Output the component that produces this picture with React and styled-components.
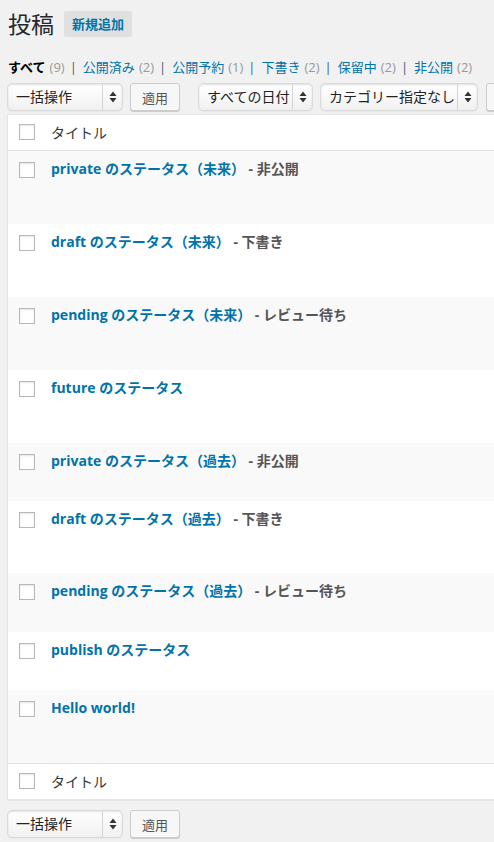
import React from 'react'
import styled, {createGlobalStyle} from 'styled-components'

const GlobalStyle = createGlobalStyle`
    html, body {
        margin: 0;
        padding: 0;
        background: #f1f1f1;
        overflow-x: hidden;
    }
    body {
        font-family: "Open Sans", "Noto Sans CJK JP", sans-serif;
        font-size: 13px;
        color: #23282d;
    }
`

const Wrap = styled.div`
    padding: 11px 0 0 7px;
    width: 580px;
`

const PageHeader = styled.div`
    display: flex;
    align-items: center;
    height: 26px;
`

const Heading = styled.h1`
    margin: 0 0 0 1px;
    font-size: 23px;
    font-weight: 400;
    line-height: 26px;
    color: #23282d;
`

const AddNew = styled.a`
    margin-left: 10px;
    padding: 0 8px;
    height: 26px;
    line-height: 26px;
    background: #e0e0e0;
    border-radius: 2px;
    color: #0073aa;
    font-weight: 700;
    font-size: 13px;
`

const Views = styled.ul`
    list-style: none;
    display: flex;
    margin: 20px 0 0 1px;
    padding: 0;
    height: 20px;
    line-height: 20px;
    color: #555;
`

const View = styled.li`
    display: flex;
    white-space: nowrap;
    a {
        color: ${p => (p.current ? '#000' : '#0073aa')};
        font-weight: ${p => (p.current ? 700 : 400)};
    }
`

const Count = styled.span`
    margin-left: 4px;
    color: #999;
    font-weight: 400;
`

const Sep = styled.span`
    margin: 0 6px 0 5px;
    color: #3c5a78;
`

const TableNav = styled.div`
    display: flex;
    align-items: center;
    height: 28px;
    margin-top: ${p => p.bottom ? '10px' : '6px'};
    margin-bottom: 3px;
`

const Select = styled.div`
    display: flex;
    align-items: stretch;
    box-sizing: border-box;
    width: ${p => p.width}px;
    height: 28px;
    margin-right: ${p => p.gap || 0}px;
    border: 1px solid #dadada;
    border-radius: 5px;
    background: linear-gradient(#ffffff, #f1f1f1);
    box-shadow: inset 0 1px 2px rgba(0, 0, 0, 0.12), 0 1px 1px rgba(0, 0, 0, 0.04);
    font-size: 14px;
    color: #222;
`

const SelectLabel = styled.span`
    flex: 1;
    padding-left: 8px;
    line-height: 26px;
    white-space: nowrap;
    overflow: hidden;
`

const SelectArrow = styled.span`
    width: 19px;
    border-left: 1px solid #d4d4d4;
    display: flex;
    align-items: center;
    justify-content: center;
`

const Button = styled.button`
    box-sizing: border-box;
    height: 28px;
    padding: 0 11px;
    margin-right: ${p => p.gap || 0}px;
    border: 1px solid #cccccc;
    border-radius: 3px;
    background: #f7f7f7;
    box-shadow: 0 1px 0 #cccccc;
    font-family: inherit;
    font-size: 13px;
    color: #555;
    white-space: nowrap;
`

const Table = styled.div`
    background: #fff;
    border: 1px solid #e5e5e5;
    box-shadow: 0 1px 1px rgba(0, 0, 0, 0.04);
`

const HeadRow = styled.div`
    display: flex;
    align-items: flex-start;
    padding: 8px 10px;
    line-height: 19px;
    font-size: 14px;
    color: #32373c;
    border-${p => (p.foot ? 'top' : 'bottom')}: 1px solid #e1e1e1;
`

const Row = styled.div`
    display: flex;
    align-items: flex-start;
    box-sizing: border-box;
    height: ${p => p.h}px;
    padding: 8px 10px;
    line-height: 19px;
    background: ${p => (p.alt ? '#f9f9f9' : '#fff')};
`

const Check = styled.span`
    box-sizing: border-box;
    flex: none;
    width: 16px;
    height: 16px;
    margin: ${p => (p.head ? '1px' : '3px')} 16px 0 1px;
    border: 1px solid #b4b9be;
    background: #fff;
    box-shadow: inset 0 1px 2px rgba(0, 0, 0, 0.1);
`

const PostTitle = styled.strong`
    font-size: 14px;
    white-space: nowrap;
    a {
        color: #0073aa;
    }
`

const PostState = styled.span`
    color: #555;
`

const Arrows = () => (
    <svg width="8" height="12" viewBox="0 0 8 12">
        <path d="M4 0.5 L7.5 5 H0.5 Z" fill="#333"/>
        <path d="M4 11.5 L7.5 7 H0.5 Z" fill="#333"/>
    </svg>
)

const Dropdown = ({label, width, gap}) => (
    <Select width={width} gap={gap}>
        <SelectLabel>{label}</SelectLabel>
        <SelectArrow><Arrows/></SelectArrow>
    </Select>
)

const views = [
    {name: 'すべて', count: 9, current: true},
    {name: '公開済み', count: 2},
    {name: '公開予約', count: 1},
    {name: '下書き', count: 2},
    {name: '保留中', count: 2},
    {name: '非公開', count: 2},
]

const posts = [
    {title: 'private のステータス（未来）', state: '非公開', h: 73},
    {title: 'draft のステータス（未来）', state: '下書き', h: 73},
    {title: 'pending のステータス（未来）', state: 'レビュー待ち', h: 73},
    {title: 'future のステータス', h: 73},
    {title: 'private のステータス（過去）', state: '非公開', h: 58},
    {title: 'draft のステータス（過去）', state: '下書き', h: 72},
    {title: 'pending のステータス（過去）', state: 'レビュー待ち', h: 59},
    {title: 'publish のステータス', h: 58},
    {title: 'Hello world!', h: 73},
]

const App = () => (
    <>
        <GlobalStyle/>
        <Wrap>
            <PageHeader>
                <Heading>投稿</Heading>
                <AddNew>新規追加</AddNew>
            </PageHeader>

            <Views>
                {views.map((v, i) => (
                    <View key={v.name} current={v.current}>
                        <a>{v.name}<Count>({v.count})</Count></a>
                        {i < views.length - 1 && <Sep>|</Sep>}
                    </View>
                ))}
            </Views>

            <TableNav>
                <Dropdown label="一括操作" width={116} gap={7}/>
                <Button gap={18}>適用</Button>
                <Dropdown label="すべての日付" width={115} gap={7}/>
                <Dropdown label="カテゴリー指定なし" width={158} gap={8}/>
                <Button>絞り込み</Button>
            </TableNav>

            <Table>
                <HeadRow>
                    <Check head/>
                    <span>タイトル</span>
                </HeadRow>
                {posts.map((post, index) => (
                    <Row key={`post-${index}`} h={post.h} alt={index % 2 === 0}>
                        <Check/>
                        <PostTitle>
                            <a>{post.title}</a>
                            {post.state && <PostState> - {post.state}</PostState>}
                        </PostTitle>
                    </Row>
                ))}
                <HeadRow foot>
                    <Check head/>
                    <span>タイトル</span>
                </HeadRow>
            </Table>

            <TableNav bottom>
                <Dropdown label="一括操作" width={116} gap={7}/>
                <Button>適用</Button>
            </TableNav>
        </Wrap>
    </>
)

export default App
